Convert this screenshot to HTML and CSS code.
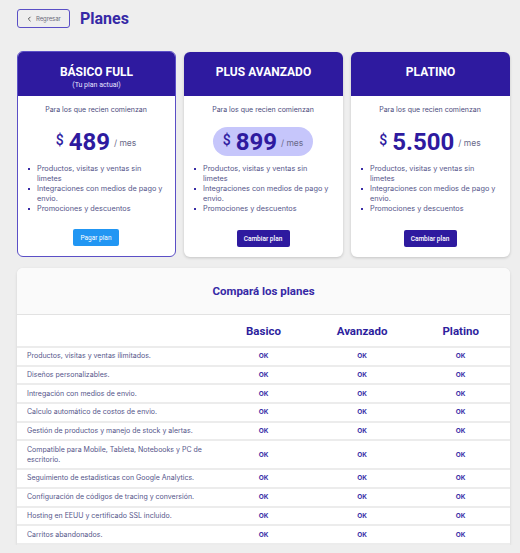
FILE: index.html
```html
<!DOCTYPE html>
<html lang="es">
<head>
<meta charset="utf-8">
<title>Planes</title>
<link rel="stylesheet" href="styles.css">
</head>
<body>
<div class="page">
  <div class="topbar">
    <button class="back"><svg class="chev" width="5" height="6" viewBox="0 0 5 6"><path d="M3.5 0.8 L1.3 3 L3.5 5.2" fill="none" stroke="#555" stroke-width="1"/></svg>Regresar</button>
    <h1 class="title">Planes</h1>
  </div>

  <div class="plans">
    <div class="card current">
      <div class="card-head">
        <div class="plan-name">BÁSICO FULL</div>
        <div class="plan-sub">(Tu plan actual)</div>
      </div>
      <div class="card-body">
        <p class="tagline">Para los que recien comienzan</p>
        <div class="price-row"><div class="price"><span class="cur">$</span><span class="amount">489</span><span class="per">/ mes</span></div></div>
        <ul class="features">
          <li>Productos, visitas y ventas sin limetes</li>
          <li>Integraciones con medios de pago y envio.</li>
          <li>Promociones y descuentos</li>
        </ul>
        <div class="actions"><button class="btn pay">Pagar plan</button></div>
      </div>
    </div>

    <div class="card">
      <div class="card-head">
        <div class="plan-name">PLUS AVANZADO</div>
      </div>
      <div class="card-body">
        <p class="tagline">Para los que recien comienzan</p>
        <div class="price-row"><div class="price pill"><span class="cur">$</span><span class="amount">899</span><span class="per">/ mes</span></div></div>
        <ul class="features">
          <li>Productos, visitas y ventas sin limetes</li>
          <li>Integraciones con medios de pago y envio.</li>
          <li>Promociones y descuentos</li>
        </ul>
        <div class="actions"><button class="btn change">Cambiar plan</button></div>
      </div>
    </div>

    <div class="card">
      <div class="card-head">
        <div class="plan-name">PLATINO</div>
      </div>
      <div class="card-body">
        <p class="tagline">Para los que recien comienzan</p>
        <div class="price-row"><div class="price"><span class="cur">$</span><span class="amount">5.500</span><span class="per">/ mes</span></div></div>
        <ul class="features">
          <li>Productos, visitas y ventas sin limetes</li>
          <li>Integraciones con medios de pago y envio.</li>
          <li>Promociones y descuentos</li>
        </ul>
        <div class="actions"><button class="btn change">Cambiar plan</button></div>
      </div>
    </div>
  </div>

  <div class="compare">
    <div class="compare-head">Compará los planes</div>
    <table class="table">
      <thead>
        <tr><th class="lbl"></th><th>Basico</th><th>Avanzado</th><th>Platino</th></tr>
      </thead>
      <tbody>
        <tr><td class="lbl">Productos, visitas y ventas ilimitados.</td><td>OK</td><td>OK</td><td>OK</td></tr>
        <tr><td class="lbl">Diseños personalizables.</td><td>OK</td><td>OK</td><td>OK</td></tr>
        <tr><td class="lbl">Intregación con medios de envio.</td><td>OK</td><td>OK</td><td>OK</td></tr>
        <tr><td class="lbl">Calculo automático de costos de envio.</td><td>OK</td><td>OK</td><td>OK</td></tr>
        <tr><td class="lbl">Gestión de productos y manejo de stock y alertas.</td><td>OK</td><td>OK</td><td>OK</td></tr>
        <tr><td class="lbl">Compatible para Mobile, Tableta, Notebooks y PC de escritorio.</td><td>OK</td><td>OK</td><td>OK</td></tr>
        <tr><td class="lbl">Seguimiento de estadísticas con Google Analytics.</td><td>OK</td><td>OK</td><td>OK</td></tr>
        <tr><td class="lbl">Configuración de códigos de tracing y conversión.</td><td>OK</td><td>OK</td><td>OK</td></tr>
        <tr><td class="lbl">Hosting en EEUU y certificado SSL incluido.</td><td>OK</td><td>OK</td><td>OK</td></tr>
        <tr><td class="lbl">Carritos abandonados.</td><td>OK</td><td>OK</td><td>OK</td></tr>
      </tbody>
    </table>
  </div>
</div>
</body>
</html>
```

FILE: styles.css
```css
* { box-sizing: border-box; }
html, body { margin: 0; padding: 0; }
body {
  background: #eeeeee;
  font-family: Inter, "Noto Sans", sans-serif;
  color: #333;
}
.page {
  padding: 9px 10px 0 17px;
}
.topbar {
  display: flex;
  align-items: center;
  gap: 10px;
  height: 19px;
}
.back {
  display: flex;
  align-items: center;
  gap: 4px;
  width: 53px;
  height: 19px;
  padding: 0 0 0 9px;
  background: #fff0;
  border: 1px solid #5a4fc6;
  border-radius: 3px;
  font-family: Inter, sans-serif;
  font-size: 6px;
  color: #6a6a7a;
  letter-spacing: -0.1px;
}
.chev { display: block; }
.title {
  margin: 0;
  font-family: Roboto, sans-serif;
  font-weight: 700;
  font-size: 16px;
  color: #3629a6;
  line-height: 19px;
}

.plans {
  display: grid;
  grid-template-columns: repeat(3, 1fr);
  gap: 8px;
  margin-top: 24px;
}
.card {
  background: #fff;
  border-radius: 6px;
  overflow: hidden;
  box-shadow: 0 1px 3px rgba(0,0,0,0.18);
  height: 205px;
  display: flex;
  flex-direction: column;
}
.card.current {
  border: 1px solid #5b4fc6;
  box-shadow: none;
  margin-top: -1px;
  height: 206px;
}
.card-head {
  background: #2e1a9f;
  height: 44px;
  flex: none;
  text-align: center;
  color: #fff;
  padding-top: 12px;
}
.plan-name {
  font-family: Roboto, sans-serif;
  font-weight: 700;
  font-size: 12px;
  line-height: 16px;
}
.plan-sub {
  font-family: Roboto, sans-serif;
  font-size: 7px;
  line-height: 9px;
  color: #e6e4ff;
  margin-top: 1px;
}
.card-body {
  flex: 1;
  display: flex;
  flex-direction: column;
  padding: 9px 10px 0 9px;
}
.tagline {
  margin: 0;
  text-align: center;
  font-size: 7px;
  line-height: 10px;
  color: #4c4c7c;
}
.price-row {
  display: flex;
  justify-content: center;
  margin-top: 12px;
  height: 29px;
}
.price {
  display: flex;
  align-items: center;
  height: 29px;
  padding: 0 10px;
  border-radius: 15px;
}
.price.pill {
  background: #c6c6fb;
}
.cur {
  font-family: Roboto, sans-serif;
  font-weight: 500;
  font-size: 14px;
  color: #2e1a9f;
  margin-right: 5px;
  margin-top: -3px;
}
.amount {
  font-family: Roboto, sans-serif;
  font-weight: 700;
  font-size: 24px;
  color: #2e1a9f;
}
.per {
  font-family: Inter, sans-serif;
  font-size: 8.5px;
  color: #6a6a8a;
  margin-left: 4px;
  margin-top: 2px;
}
.features {
  margin: 8px 0 0 0;
  padding: 0 0 0 10px;
  list-style: none;
  font-size: 7.3px;
  line-height: 10px;
  color: #55558a;
}
.features li { position: relative; }
.features li::before {
  content: "";
  position: absolute;
  left: -9px;
  top: 4px;
  width: 2px;
  height: 2px;
  background: #3a2ea6;
}
.actions {
  margin-top: auto;
  margin-bottom: 10px;
  display: flex;
  justify-content: center;
}
.btn {
  border: none;
  border-radius: 2px;
  height: 17px;
  font-family: Roboto, sans-serif;
  font-size: 6.5px;
  color: #fff;
  padding: 0;
}
.btn.pay { background: #2196f3; width: 46px; }
.btn.change { background: #2e1a9f; width: 53px; font-weight: 500; }

.compare {
  margin-top: 11px;
  background: #fff;
  border-radius: 6px 6px 0 0;
  overflow: hidden;
  box-shadow: 0 1px 3px rgba(0,0,0,0.12);
}
.compare-head {
  background: #fafafa;
  height: 47px;
  border-bottom: 1px solid #e2e2e2;
  display: flex;
  align-items: center;
  justify-content: center;
  font-family: Roboto, sans-serif;
  font-weight: 700;
  font-size: 11.5px;
  color: #3629a6;
}
.table {
  width: 100%;
  border-collapse: collapse;
  table-layout: fixed;
}
.table th {
  height: 32px;
  font-family: Roboto, sans-serif;
  font-weight: 700;
  font-size: 11.5px;
  color: #2e1f9e;
  text-align: center;
  width: 20%;
  border-bottom: 2px solid #ececec;
}
.table th.lbl { width: 40%; }
.table td {
  height: 16.7px;
  border-bottom: 2px solid #ececec;
  text-align: center;
  font-family: Inter, sans-serif;
  font-weight: 700;
  font-size: 6.5px;
  color: #3a30a8;
  padding: 0;
}
.table td.lbl {
  text-align: left;
  font-weight: 400;
  font-size: 7px;
  line-height: 10px;
  color: #55558a;
  padding: 3.35px 4px 3.35px 10px;
}
```
